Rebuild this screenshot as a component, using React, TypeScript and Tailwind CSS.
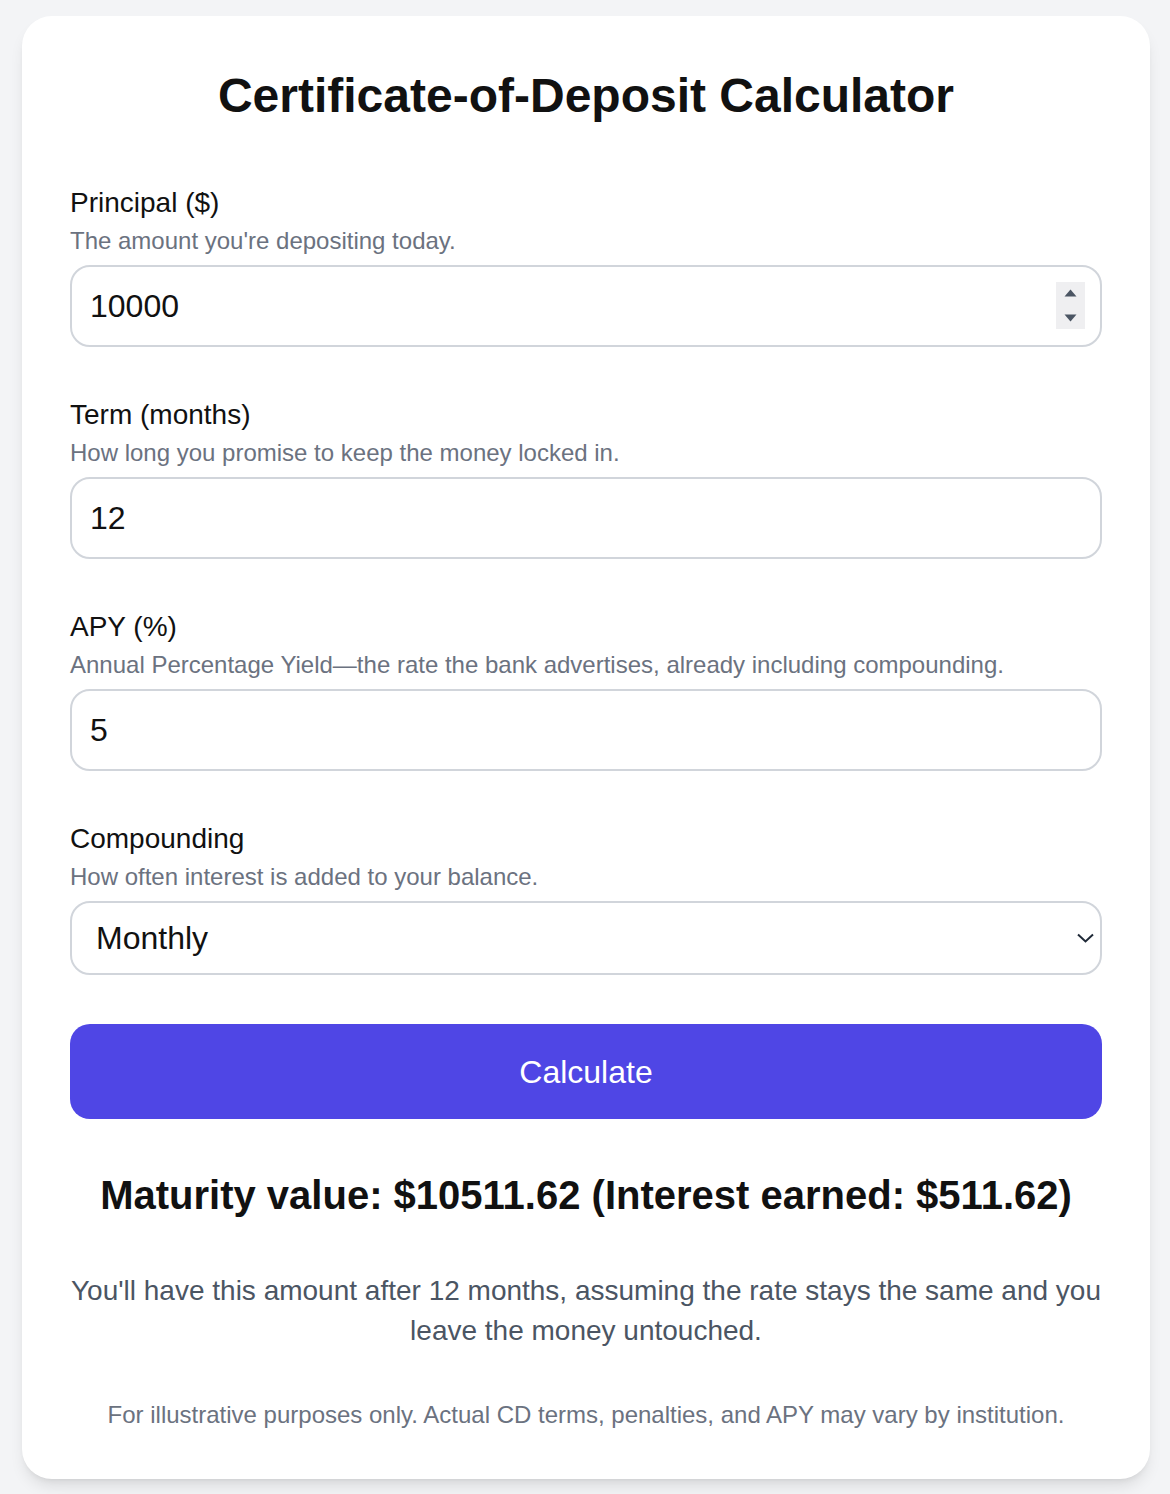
import { useState } from "react";

// Each field is a label, a one-line hint under it, and the control.
const fields = [
  { id: "principal", label: "Principal ($)", hint: "The amount you're depositing today.", value: "10000", spinner: true },
  { id: "term", label: "Term (months)", hint: "How long you promise to keep the money locked in.", value: "12", spinner: false },
  {
    id: "apy",
    label: "APY (%)",
    hint: "Annual Percentage Yield\u2014the rate the bank advertises, already including compounding.",
    value: "5",
    spinner: false,
  },
];

function Spinner() {
  return (
    <span className="pointer-events-none absolute right-[17px] top-[17px] flex h-[47px] w-[29px] flex-col items-center justify-center gap-[17px] bg-[#efeff1]">
      <svg width="13" height="8" viewBox="0 0 13 8">
        <path d="M6.5 0.5 L12.5 7.5 L0.5 7.5 Z" fill="#4b5563" />
      </svg>
      <svg width="13" height="8" viewBox="0 0 13 8">
        <path d="M0.5 0.5 L12.5 0.5 L6.5 7.5 Z" fill="#4b5563" />
      </svg>
    </span>
  );
}

export default function App() {
  const [values, setValues] = useState<Record<string, string>>({ principal: "10000", term: "12", apy: "5" });
  const [compounding, setCompounding] = useState("monthly");

  return (
    <div className="min-h-screen bg-[#f3f4f6] pt-4 font-['Liberation_Sans',Arial,sans-serif]">
      <div className="ml-[22px] w-[1128px] rounded-[30px] bg-white px-12 pb-12 pt-12 shadow-lg">
        <h1 className="mb-[57px] text-center text-[48px] font-bold leading-[64px] text-[#111]">
          Certificate-of-Deposit Calculator
        </h1>

        {fields.map((f) => (
          <div key={f.id} className="mb-[50px]">
            <label htmlFor={f.id} className="block text-[28px] leading-[36px] text-[#111]">
              {f.label}
            </label>
            <p className="mt-1 text-[24px] leading-[32px] text-[#6b7280]">{f.hint}</p>
            <div className="relative mt-2">
              <input
                id={f.id}
                type="text"
                value={values[f.id]}
                onChange={(e) => setValues({ ...values, [f.id]: e.target.value })}
                className="block h-[82px] w-full rounded-[20px] border-2 border-[#d1d5db] bg-white px-[18px] text-[32px] text-[#111] outline-none"
              />
              {f.spinner && <Spinner />}
            </div>
          </div>
        ))}

        <div>
          <label htmlFor="compounding" className="block text-[28px] leading-[36px] text-[#111]">
            Compounding
          </label>
          <p className="mt-1 text-[24px] leading-[32px] text-[#6b7280]">How often interest is added to your balance.</p>
          <div className="relative mt-2">
            <select
              id="compounding"
              value={compounding}
              onChange={(e) => setCompounding(e.target.value)}
              className="block h-[74px] w-full appearance-none rounded-[20px] border-2 border-[#d1d5db] bg-white pl-6 pr-12 text-[32px] text-[#111] outline-none"
            >
              <option value="daily">Daily</option>
              <option value="monthly">Monthly</option>
              <option value="quarterly">Quarterly</option>
              <option value="annually">Annually</option>
            </select>
            <svg
              className="pointer-events-none absolute right-[8px] top-[32px]"
              width="17"
              height="10"
              viewBox="0 0 17 10"
              fill="none"
            >
              <path d="M1 1.5 L8.5 8.5 L16 1.5" stroke="#1f2937" strokeWidth="2" />
            </svg>
          </div>
        </div>

        <button className="mt-[49px] block h-[95px] w-full rounded-[20px] bg-[#4f46e5] text-[32px] text-white">
          Calculate
        </button>

        <h2 className="mt-12 text-center text-[40px] font-bold leading-[56px] text-[#111]">
          Maturity value: $10511.62 (Interest earned: $511.62)
        </h2>

        <p className="-mx-2 mt-12 text-center text-[28px] leading-[40px] text-[#4b5563]">
          You'll have this amount after 12 months, assuming the rate stays the same and you
          <br />
          leave the money untouched.
        </p>

        <p className="mt-12 text-center text-[24px] leading-[32px] text-[#6b7280]">
          For illustrative purposes only. Actual CD terms, penalties, and APY may vary by institution.
        </p>
      </div>
    </div>
  );
}
